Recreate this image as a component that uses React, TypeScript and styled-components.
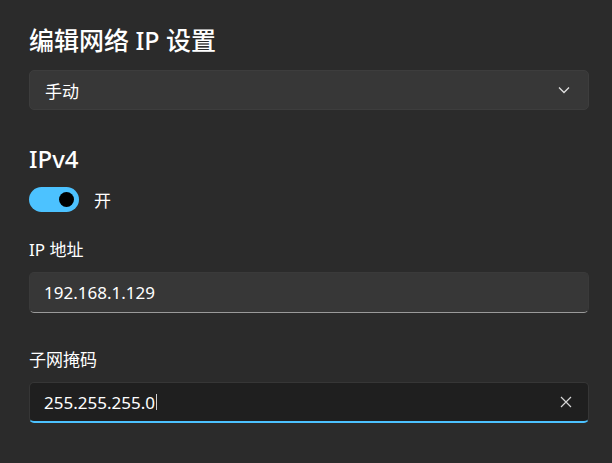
import { useState } from 'react';
import styled, { createGlobalStyle } from 'styled-components';

const GlobalStyle = createGlobalStyle`
  html, body {
    margin: 0;
    padding: 0;
    background: #2b2b2b;
  }
  * { box-sizing: border-box; }
`;

const FONT = `"Noto Sans", "Noto Sans CJK SC", sans-serif`;

const Page = styled.div`
  width: 612px;
  height: 463px;
  background: #2b2b2b;
  padding: 24px 23px 0 29px;
  display: flex;
  flex-direction: column;
  font-family: ${FONT};
  color: #ffffff;
  overflow: hidden;
`;

const Title = styled.h1`
  margin: 0;
  font-size: 25px;
  line-height: 32px;
  font-weight: 500;
`;

const Heading = styled.h2<{ $gap: number }>`
  margin: ${(p) => p.$gap}px 0 0;
  font-size: 24px;
  line-height: 32px;
  font-weight: 500;
`;

const Select = styled.div`
  margin-top: 14px;
  height: 40px;
  background: #373737;
  border: 1px solid #3d3d3d;
  border-radius: 5px;
  display: flex;
  align-items: center;
  justify-content: space-between;
  padding: 0 18px 0 15px;
  font-size: 17px;
`;

const ToggleRow = styled.div`
  margin-top: 12px;
  display: flex;
  align-items: center;
  gap: 15px;
  font-size: 17px;
`;

const Track = styled.button<{ $on: boolean }>`
  width: 50px;
  height: 25px;
  border-radius: 13px;
  border: none;
  background: ${(p) => (p.$on ? '#4cc2ff' : '#3a3a3a')};
  display: flex;
  align-items: center;
  justify-content: ${(p) => (p.$on ? 'flex-end' : 'flex-start')};
  padding: 0 5px;
  cursor: pointer;
`;

const Knob = styled.span`
  width: 15px;
  height: 15px;
  border-radius: 50%;
  background: #000000;
`;

const Label = styled.div<{ $gap: number }>`
  margin-top: ${(p) => p.$gap}px;
  font-size: 17px;
  line-height: 20px;
`;

const Field = styled.div<{ $focused?: boolean }>`
  margin-top: 12px;
  height: 41px;
  border-radius: 5px;
  display: flex;
  align-items: center;
  justify-content: space-between;
  padding: 0 16px 0 14px;
  font-size: 17px;
  background: ${(p) => (p.$focused ? '#1f1f1f' : '#373737')};
  border: 1px solid ${(p) => (p.$focused ? '#363636' : '#3a3a3a')};
  border-bottom: ${(p) => (p.$focused ? '2px solid #4cc2ff' : '1px solid #9a9a9a')};
`;

const Value = styled.span`
  display: flex;
  align-items: center;
`;

const Caret = styled.span`
  display: inline-block;
  width: 1px;
  height: 16px;
  margin-left: 1px;
  background: #d0d0d0;
`;

const Chevron = () => (
  <svg width="12" height="12" viewBox="0 0 12 12">
    <polyline points="1,3.5 6,8.5 11,3.5" fill="none" stroke="#e0e0e0" strokeWidth="1.3" />
  </svg>
);

const Clear = () => (
  <svg width="12" height="12" viewBox="0 0 12 12">
    <path d="M1 1 L11 11 M11 1 L1 11" stroke="#d6d6d6" strokeWidth="1.2" fill="none" />
  </svg>
);

export default function App() {
  const [on, setOn] = useState(true);

  return (
    <>
      <GlobalStyle />
      <Page>
        <Title>编辑网络 IP 设置</Title>
        <Select>
          <span>手动</span>
          <Chevron />
        </Select>

        <Heading $gap={33}>IPv4</Heading>
        <ToggleRow>
          <Track $on={on} onClick={() => setOn(!on)}>
            <Knob />
          </Track>
          <span>{on ? '开' : '关'}</span>
        </ToggleRow>

        <Label $gap={28}>IP 地址</Label>
        <Field>
          <Value>192.168.1.129</Value>
        </Field>

        <Label $gap={37}>子网掩码</Label>
        <Field $focused>
          <Value>
            255.255.255.0
            <Caret />
          </Value>
          <Clear />
        </Field>
      </Page>
    </>
  );
}
